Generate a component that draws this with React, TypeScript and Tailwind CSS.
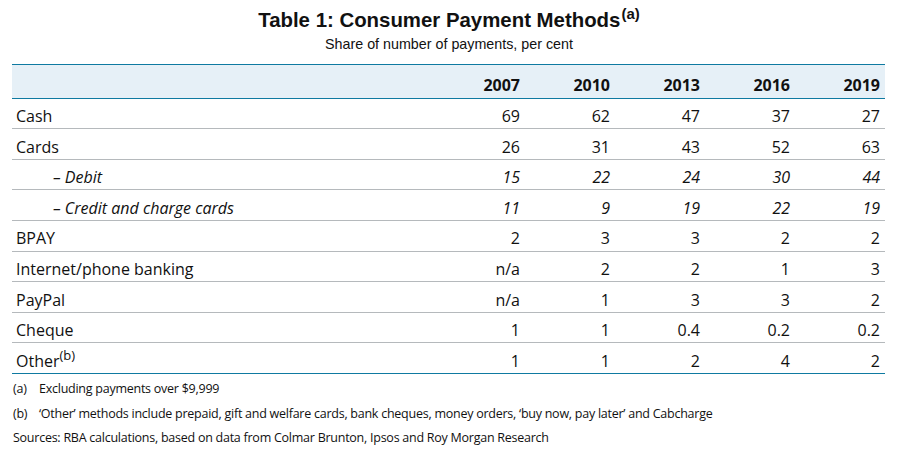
import React from "react";

type Row = { label: string; sup?: string; italic?: boolean; indent?: boolean; values: string[] };

const rows: Row[] = [
  { label: "Cash", values: ["69", "62", "47", "37", "27"] },
  { label: "Cards", values: ["26", "31", "43", "52", "63"] },
  { label: "– Debit", italic: true, indent: true, values: ["15", "22", "24", "30", "44"] },
  { label: "– Credit and charge cards", italic: true, indent: true, values: ["11", "9", "19", "22", "19"] },
  { label: "BPAY", values: ["2", "3", "3", "2", "2"] },
  { label: "Internet/phone banking", values: ["n/a", "2", "2", "1", "3"] },
  { label: "PayPal", values: ["n/a", "1", "3", "3", "2"] },
  { label: "Cheque", values: ["1", "1", "0.4", "0.2", "0.2"] },
  { label: "Other", sup: "(b)", values: ["1", "1", "2", "4", "2"] },
];

const years = ["2007", "2010", "2013", "2016", "2019"];

export default function App() {
  return (
    <div className="w-[898px] h-[456px] bg-white text-[#111] overflow-hidden">
      <div className="pt-[8px] text-center font-['Liberation_Sans',Arial,sans-serif] font-bold text-[20.4px] leading-[24px]">
        Table 1: Consumer Payment Methods
        <sup className="text-[15px] relative -top-[8px] ml-[1px]">(a)</sup>
      </div>
      <div className="mt-[4px] text-center font-['Liberation_Sans',Arial,sans-serif] text-[14.3px] leading-[17px]">
        Share of number of payments, per cent
      </div>
      <div className="mt-[10.7px] ml-[12px] w-[873px] font-['Open_Sans',sans-serif]">
        <div className="flex items-end h-[35px] bg-[#e6f0f7] border-t border-b border-[#0f7aa1] pb-[3px] pr-[5px]">
          <div className="flex-1" />
          {years.map((y) => (
            <div key={y} className="w-[90px] text-right font-bold text-[16px] leading-[20px]">
              {y}
            </div>
          ))}
        </div>
        {rows.map((r, i) => (
          <div
            key={r.label}
            className={
              "flex items-center h-[30.6px] pt-[5px] pr-[5px] pl-[4px] text-[16px] leading-[20px] border-b " +
              (i === rows.length - 1 ? "border-[#0f7aa1]" : "border-[#b5b9bc]")
            }
          >
            <div className={"flex-1 " + (r.italic ? "italic " : "") + (r.indent ? "pl-[37px]" : "")}>
              {r.label}
              {r.sup && <sup className="text-[13px] relative -top-[7px]">{r.sup}</sup>}
            </div>
            {r.values.map((v, j) => (
              <div key={j} className={"w-[90px] text-right " + (r.italic ? "italic" : "")}>
                {v}
              </div>
            ))}
          </div>
        ))}
        <div className="mt-[3px] pl-[1px] text-[12.5px] tracking-[-0.25px] leading-[24.5px]">
          <div className="flex">
            <span className="w-[26px]">(a)</span>
            <span>Excluding payments over $9,999</span>
          </div>
          <div className="flex">
            <span className="w-[26px]">(b)</span>
            <span>‘Other’ methods include prepaid, gift and welfare cards, bank cheques, money orders, ‘buy now, pay later’ and Cabcharge</span>
          </div>
          <div>Sources: RBA calculations, based on data from Colmar Brunton, Ipsos and Roy Morgan Research</div>
        </div>
      </div>
    </div>
  );
}
